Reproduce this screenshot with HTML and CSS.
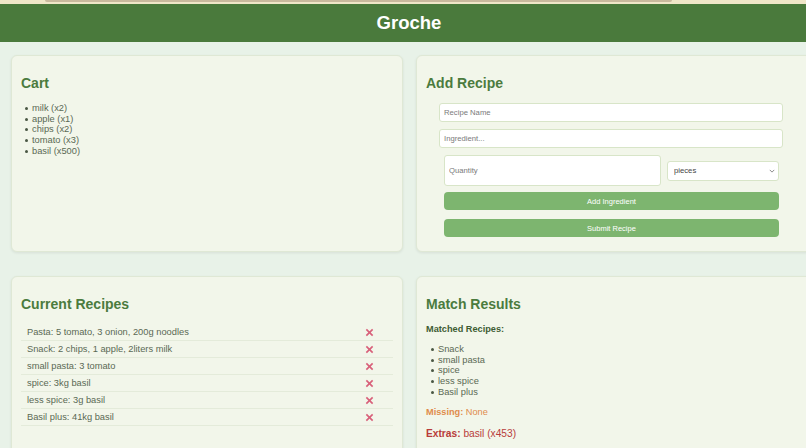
FILE: index.html
```html
<!DOCTYPE html>
<html lang="en">
<head>
    <meta charset="UTF-8">
    <meta name="viewport" content="width=device-width, initial-scale=1.0">
    <title>Groche</title>
    <link rel="stylesheet" href="styles.css">
</head>
<body>
    <div class="topbar"><div class="topbar-track"></div></div>
    <header class="site-header">
        <h1>Groche</h1>
    </header>

    <main class="board">
        <!-- Carrito -->
        <section class="card">
            <h2>Cart</h2>
            <ul class="plain-list">
                <li>milk (x2)</li>
                <li>apple (x1)</li>
                <li>chips (x2)</li>
                <li>tomato (x3)</li>
                <li>basil (x500)</li>
            </ul>
        </section>

        <!-- Formulario de receta -->
        <section class="card">
            <h2>Add Recipe</h2>
            <div class="recipe-form">
                <input type="text" class="field" placeholder="Recipe Name">
                <input type="text" class="field" placeholder="Ingredient...">
                <div class="qty-row">
                    <input type="text" class="field qty" placeholder="Quantity">
                    <div class="unit-wrap">
                        <select class="unit">
                            <option>pieces</option>
                            <option>g</option>
                            <option>kg</option>
                            <option>liters</option>
                        </select>
                        <svg class="chevron" viewBox="0 0 8 5" width="6" height="4"><path d="M1 1 L4 4 L7 1"/></svg>
                    </div>
                </div>
                <button class="btn">Add Ingredient</button>
                <button class="btn">Submit Recipe</button>
            </div>
        </section>

        <!-- Recetas actuales -->
        <section class="card">
            <h2>Current Recipes</h2>
            <ul class="recipe-list">
                <li><span>Pasta: 5 tomato, 3 onion, 200g noodles</span><span class="remove"><svg viewBox="0 0 10 10" width="9" height="9"><path d="M1.5 1.5 L8.5 8.5 M8.5 1.5 L1.5 8.5"/></svg></span></li>
                <li><span>Snack: 2 chips, 1 apple, 2liters milk</span><span class="remove"><svg viewBox="0 0 10 10" width="9" height="9"><path d="M1.5 1.5 L8.5 8.5 M8.5 1.5 L1.5 8.5"/></svg></span></li>
                <li><span>small pasta: 3 tomato</span><span class="remove"><svg viewBox="0 0 10 10" width="9" height="9"><path d="M1.5 1.5 L8.5 8.5 M8.5 1.5 L1.5 8.5"/></svg></span></li>
                <li><span>spice: 3kg basil</span><span class="remove"><svg viewBox="0 0 10 10" width="9" height="9"><path d="M1.5 1.5 L8.5 8.5 M8.5 1.5 L1.5 8.5"/></svg></span></li>
                <li><span>less spice: 3g basil</span><span class="remove"><svg viewBox="0 0 10 10" width="9" height="9"><path d="M1.5 1.5 L8.5 8.5 M8.5 1.5 L1.5 8.5"/></svg></span></li>
                <li><span>Basil plus: 41kg basil</span><span class="remove"><svg viewBox="0 0 10 10" width="9" height="9"><path d="M1.5 1.5 L8.5 8.5 M8.5 1.5 L1.5 8.5"/></svg></span></li>
            </ul>
        </section>

        <!-- Resultados -->
        <section class="card">
            <h2>Match Results</h2>
            <p class="matched">Matched Recipes:</p>
            <ul class="plain-list match-list">
                <li>Snack</li>
                <li>small pasta</li>
                <li>spice</li>
                <li>less spice</li>
                <li>Basil plus</li>
            </ul>
            <p class="missing"><strong>Missing:</strong> None</p>
            <p class="extras"><strong>Extras:</strong> basil (x453)</p>
        </section>
    </main>
</body>
</html>
```

FILE: styles.css
```css
html, body {
    overflow: hidden;
}
body {
    font-family: "Liberation Sans", Arial, sans-serif;
    background-color: #e8f2e8;
    color: #5a6954;
    margin: 0;
    padding: 0;
    width: 818px;
    height: 448px;
}
.topbar {
    height: 4px;
    background-color: #efe6c7;
}
.topbar-track {
    margin-left: 45px;
    width: 627px;
    height: 2px;
    background-color: #c8b99d;
    border-radius: 0 0 2px 2px;
}
.site-header {
    height: 38px;
    background-color: #4a7a3c;
    display: flex;
    align-items: center;
    justify-content: center;
}
.site-header h1 {
    margin: 0;
    color: #fff;
    font-size: 18.5px;
    line-height: 22px;
}
.board {
    display: grid;
    grid-template-columns: 392px 396px;
    column-gap: 13px;
    row-gap: 24px;
    padding: 13px 0 0 11px;
}
.card {
    background-color: #f2f6ea;
    border: 1px solid #dfe8d5;
    border-radius: 6px;
    box-shadow: 0 1px 3px rgba(0, 0, 0, 0.08);
    padding: 8px 9px 14px;
}
.card h2 {
    margin: 11px 0 12px;
    font-size: 14px;
    line-height: 16px;
    color: #4b7b3e;
}
.plain-list {
    list-style: none;
    margin: 0;
    padding-left: 11px;
    font-size: 9.3px;
    line-height: 10.7px;
}
.plain-list li {
    position: relative;
}
.plain-list li::before {
    content: "";
    position: absolute;
    left: -7.5px;
    top: 4px;
    width: 3px;
    height: 3px;
    border-radius: 50%;
    background-color: #4a5744;
}
.recipe-form {
    padding: 0 19px 0 13px;
    display: flex;
    flex-direction: column;
}
.field {
    box-sizing: border-box;
    height: 19px;
    width: 100%;
    margin: 0 0 7px;
    padding: 0 4px;
    font-family: "Liberation Sans", Arial, sans-serif;
    font-size: 7.7px;
    color: #333;
    background-color: #fff;
    border: 1px solid #d8e5c8;
    border-radius: 3px;
}
.field::placeholder {
    color: #7a7a7a;
}
.qty-row {
    display: flex;
    align-items: center;
    gap: 6px;
    padding: 0 4px 0 5px;
    margin-bottom: 6px;
}
.field.qty {
    height: 31px;
    width: 217px;
    margin: 0;
}
.unit-wrap {
    position: relative;
    flex: 1;
    display: flex;
}
.unit {
    box-sizing: border-box;
    appearance: none;
    width: 100%;
    height: 20px;
    padding: 0 6px;
    font-family: "Liberation Sans", Arial, sans-serif;
    font-size: 7.7px;
    color: #444;
    background-color: #fff;
    border: 1px solid #d8e5c8;
    border-radius: 3px;
}
.chevron {
    position: absolute;
    right: 4px;
    top: 8px;
    stroke: #666;
    stroke-width: 1;
    fill: none;
    pointer-events: none;
}
.btn {
    height: 18px;
    margin: 0 4px 9px 5px;
    padding: 0;
    background-color: #7db56f;
    color: #fff;
    border: none;
    border-radius: 4px;
    font-family: "Liberation Sans", Arial, sans-serif;
    font-size: 7.5px;
    cursor: pointer;
}
.btn:last-child {
    margin-bottom: 0;
}
.recipe-list {
    list-style: none;
    margin: 0 0 30px;
    padding: 0;
    font-size: 9.3px;
}
.recipe-list li {
    display: flex;
    align-items: center;
    justify-content: space-between;
    height: 16px;
    padding: 0 19px 0 6px;
    border-bottom: 1px solid #e4ebda;
}
.remove svg {
    display: block;
    stroke: #d8607a;
    stroke-width: 1.8;
    fill: none;
}
.matched {
    margin: 0 0 9.3px;
    font-size: 9.2px;
    line-height: 10.7px;
    font-weight: bold;
    color: #3e5c33;
}
.match-list {
    padding-left: 12px;
    margin-bottom: 9.3px;
}
.missing {
    margin: 0 0 10.5px;
    font-size: 9.2px;
    line-height: 10.7px;
    color: #e08c4c;
}
.extras {
    margin: 0 0 20px;
    font-size: 10.2px;
    line-height: 12px;
    color: #b83c3a;
}
```
